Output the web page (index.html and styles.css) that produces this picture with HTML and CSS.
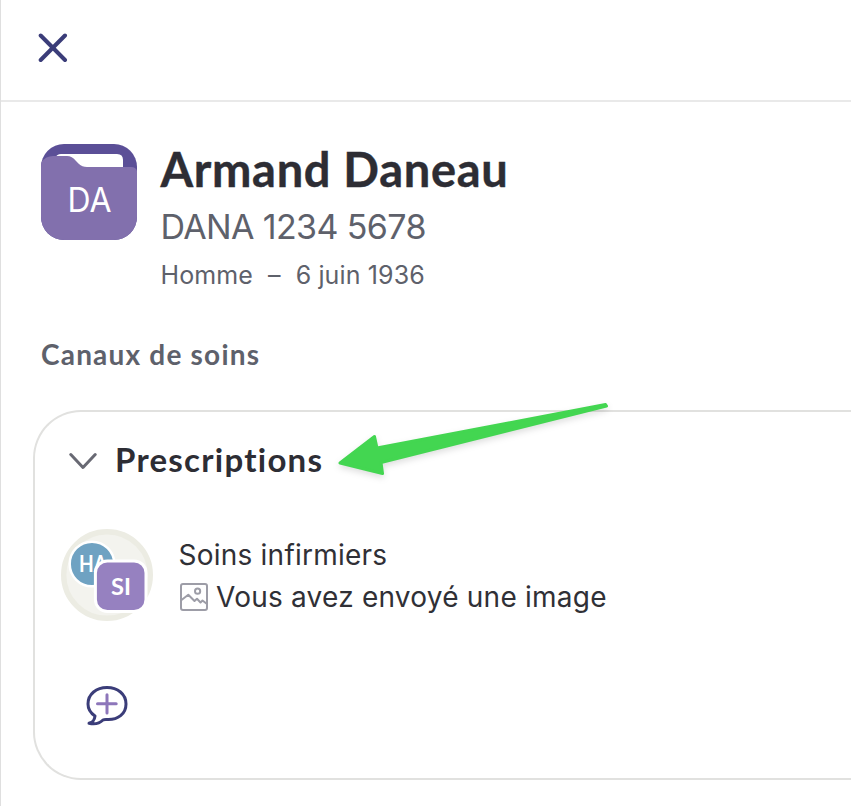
FILE: index.html
```html
<!DOCTYPE html>
<html lang="fr">
<head>
<meta charset="utf-8">
<title>Armand Daneau</title>
<link rel="stylesheet" href="styles.css">
</head>
<body>
<main class="panel">
  <header class="topbar">
    <svg class="close" width="30" height="30" viewBox="0 0 30 30"><path d="M2.7 2.5 27 27M27 2.5 2.7 27"/></svg>
  </header>
  <section class="patient">
    <svg class="folder" width="96" height="96" viewBox="0 0 96 96">
      <defs><clipPath id="tile"><rect width="96" height="96" rx="23"/></clipPath></defs>
      <g clip-path="url(#tile)">
        <rect width="96" height="96" fill="#5b4f97"/>
        <path d="M14 14Q16 10 20 10H76Q82 10 82 16V30H14Z" fill="#fff"/>
        <path d="M0 18Q5 12 12 12H26Q31 12 35 17L38 20Q41 23 46 23H90Q95 23 96 27V96H0Z" fill="#8270ad"/>
      </g>
      <text class="folder-text" x="48.5" y="68" text-anchor="middle" textLength="44" lengthAdjust="spacingAndGlyphs">DA</text>
    </svg>
    <div class="identity">
      <h1 class="name">Armand Daneau</h1>
      <div class="number">DANA 1234 5678</div>
      <div class="details"><span>Homme</span><span>–</span><span>6 juin 1936</span></div>
    </div>
  </section>
  <h2 class="section-title">Canaux de soins</h2>
  <section class="card">
    <div class="card-head">
      <svg class="chevron" width="28" height="18" viewBox="0 0 28 18"><path d="M1.8 2.5 14 15.5 26.2 2.5"/></svg>
      <h3 class="card-title">Prescriptions</h3>
    </div>
    <div class="channel">
      <svg class="avatars" width="92" height="92" viewBox="0 0 92 92">
        <circle cx="46" cy="46" r="43.3" fill="#f3f3ee" stroke="#ecece3" stroke-width="5.4"/>
        <circle cx="31" cy="35" r="22.3" fill="#6fa2c2" stroke="#fff" stroke-width="2.5"/>
        <text class="initials" x="18" y="43.3" textLength="28" lengthAdjust="spacingAndGlyphs">HA</text>
        <rect x="34.4" y="31.9" width="50.6" height="50.6" rx="12" fill="#9681c0" stroke="#fff" stroke-width="3"/>
        <text class="initials initials-front" x="50" y="65.7" textLength="20" lengthAdjust="spacingAndGlyphs">SI</text>
      </svg>
      <div class="messages">
        <div class="channel-name">Soins infirmiers</div>
        <div class="preview">
          <svg class="picture" width="28" height="28" viewBox="0 0 28 28"><rect x="1" y="1" width="26" height="26" rx="2"/><circle cx="17.6" cy="8.2" r="2.6"/><path d="M1.5 17 8.3 11.8 14.5 18 17 15.7 20.5 19.5 22.5 17.5 27 21"/></svg>
          <span class="preview-text">Vous avez envoyé une image</span>
        </div>
      </div>
    </div>
    <svg class="new-chat" width="42" height="42" viewBox="0 0 42 42">
      <path class="bubble" d="M9 31C4.5 28 2 23.500 2 19C2 9 10.500 2.500 21 2.500S40 9 40 19S32 35 21 34.500C19 34.400 18 34.400 17 35C13 39 8.500 39.500 3 38.300C7 37 8.500 35.500 9 31Z"/>
      <path class="plus" d="M11.500 18.700H30.200M21 9.700V28"/>
    </svg>
  </section>
</main>
<svg class="arrow" width="280" height="90" viewBox="330 395 280 90"><path d="M340 463 374.500 436.500 377 448 605.500 404.500 606.500 406 381 462.500 382.500 473.500Z"/></svg>
</body>
</html>
```

FILE: styles.css
```css
* { box-sizing: border-box; }
body { margin: 0; background: #fff; overflow: hidden; font-family: Inter, sans-serif; }
svg { display: block; flex: none; }
h1, h2, h3 { margin: 0; font-family: Lato, sans-serif; font-weight: 700; white-space: nowrap; }
.panel { height: 806px; border-left: 1px solid #dfdfdf; }
.topbar { height: 102px; padding: 33px 0 0 36.5px; border-bottom: 2px solid #e9e9e9; }
.close { fill: none; stroke: #3b3d79; stroke-width: 4; stroke-linecap: round; }
.patient { display: flex; gap: 24px; padding: 38px 0 0 39.5px; }
.folder { margin-top: 4px; }
.folder-text { font-size: 34px; fill: #fff; }
.identity { display: flex; flex-direction: column; white-space: nowrap; color: #5e616b; }
.name { margin-top: 1px; font-size: 47px; line-height: 56px; letter-spacing: .7px; color: #2d2d34; -webkit-text-stroke: .4px #2d2d34; }
.number { margin-top: 6px; font-size: 34px; line-height: 48px; letter-spacing: -.63px; }
.details { display: flex; gap: 15px; margin-top: 4px; font-size: 25px; line-height: 40px; letter-spacing: .12px; }
.section-title { margin: 41px 0 0 40px; font-size: 28px; line-height: 36px; letter-spacing: 1.2px; color: #5e616b; }
.card { height: 370px; margin: 38px 0 0 32px; padding: 27px 0 0 26px; border: 2px solid #e1e1df; border-right: 0; border-radius: 48px 0 0 48px; }
.card-head { display: flex; align-items: center; gap: 18.5px; height: 40px; padding-left: 7.500px; }
.chevron { fill: none; stroke: #686973; stroke-width: 3; stroke-linecap: round; stroke-linejoin: round; margin-top: 4px; }
.card-title { font-size: 33px; line-height: 40px; letter-spacing: 1.25px; color: #2d2d34; }
.channel { display: flex; gap: 26px; margin-top: 50px; margin-left: -.5px; }
.initials { font: 700 22px Lato, sans-serif; fill: #fff; }
.initials-front { font-size: 23px; }
.messages { margin-top: 5px; color: #303036; font-size: 28px; line-height: 42px; white-space: nowrap; letter-spacing: .23px; }
.preview { display: flex; align-items: center; gap: 8px; padding-left: 1.5px; }
.picture { margin-top: -1px; fill: none; stroke: #9d9da7; stroke-width: 2; stroke-linejoin: round; }
.new-chat { margin: 64px 0 0 24.5px; fill: none; stroke-linecap: round; stroke-linejoin: round; }
.bubble { stroke: #3b3d79; stroke-width: 3; }
.plus { stroke: #8d76ba; stroke-width: 3; }
.arrow { position: absolute; left: 330px; top: 395px; fill: #43d651; stroke: #43d651; stroke-width: 3; stroke-linejoin: round; filter: drop-shadow(0 3px 3px rgba(0, 0, 0, .13)); }
```
